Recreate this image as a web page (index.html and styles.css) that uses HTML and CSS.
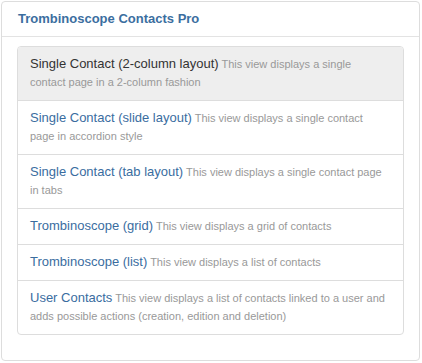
FILE: index.html
```html
<!doctype html>
<html lang="en">
<head>
    <meta charset="UTF-8">
    <title>Trombinoscope Contacts Pro</title>
    <link rel="stylesheet" href="styles.css">
</head>
<body>
    <div class="panel">
        <div class="panel-heading">Trombinoscope Contacts Pro</div>
        <div class="panel-body">
            <ul class="views">
                <li class="active">
                    <a href="#">Single Contact (2-column layout)</a>
                    <small>This view displays a single contact page in a 2-column fashion</small>
                </li>
                <li>
                    <a href="#">Single Contact (slide layout)</a>
                    <small>This view displays a single contact page in accordion style</small>
                </li>
                <li>
                    <a href="#">Single Contact (tab layout)</a>
                    <small>This view displays a single contact page in tabs</small>
                </li>
                <li>
                    <a href="#">Trombinoscope (grid)</a>
                    <small>This view displays a grid of contacts</small>
                </li>
                <li>
                    <a href="#">Trombinoscope (list)</a>
                    <small>This view displays a list of contacts</small>
                </li>
                <li>
                    <a href="#">User Contacts</a>
                    <small>This view displays a list of contacts linked to a user and adds possible actions (creation, edition and deletion)</small>
                </li>
            </ul>
        </div>
    </div>
</body>
</html>
```

FILE: styles.css
```css
*{
    margin: 0;
    padding: 0;
    box-sizing: border-box;
}
body{
    font-family: "Liberation Sans", Arial, sans-serif;
    background: #fff;
    padding: 1px;
}
.panel{
    width: 419px;
    height: 360px;
    border: 1px solid #dddddd;
    border-radius: 4px;
}
.panel-heading{
    height: 35px;
    padding: 0 16px;
    line-height: 34px;
    font-size: 13px;
    font-weight: bold;
    color: #3b6e9f;
    border-bottom: 1px solid #e3e3e3;
}
.panel-body{
    padding: 9px 15px 0 15px;
}
.views{
    list-style: none;
    border: 1px solid #dddddd;
    border-radius: 4px;
}
.views li{
    padding: 8px 15px 9px 12px;
    line-height: 18px;
    font-size: 11px;
    border-top: 1px solid #dddddd;
}
.views li:first-child{
    border-top: 0;
}
.views li.active{
    background: #eeeeee;
    border-radius: 3px 3px 0 0;
}
.views a{
    font-size: 13px;
    line-height: 18px;
    color: #3a6d9f;
    text-decoration: none;
}
.views li.active a{
    color: #333333;
}
.views small{
    font-size: 11px;
    color: #999999;
}
```
